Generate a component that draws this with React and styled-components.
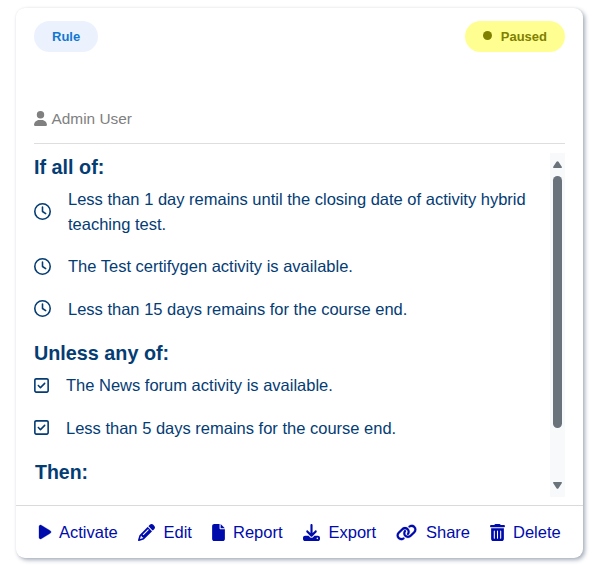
import React from "react";
import styled, { createGlobalStyle } from "styled-components";
import { FaUser, FaRegClock, FaRegSquareCheck, FaPlay, FaPencil, FaFile, FaDownload, FaLink, FaTrashCan } from "react-icons/fa6";

const Global = createGlobalStyle`
  *, *::before, *::after { box-sizing: border-box; }
  body { margin: 0; background: #fff; font-family: "Liberation Sans", Arial, sans-serif; }
`;

const Page = styled.main`
  height: 566px;
  padding: 8px 14px 8px 16px;
  overflow: hidden;
`;

const Card = styled.article`
  display: flex;
  flex-direction: column;
  width: 567px;
  height: 550px;
  border-radius: 9px;
  background: #fff;
  box-shadow: 2px 2px 4px rgba(9, 30, 66, 0.36), 0 0 2px rgba(9, 30, 66, 0.06);
`;

const Header = styled.header`
  display: flex;
  justify-content: space-between;
  align-items: flex-start;
  height: 88px;
  padding: 13px 18px 0;
`;

const Pill = styled.span`
  display: flex;
  align-items: center;
  gap: 9px;
  height: 31px;
  padding: 0 18px;
  border-radius: 16px;
  font-size: 13px;
  font-weight: 700;
  color: ${(p) => (p.$paused ? "#808000" : "#1177d1")};
  background: ${(p) => (p.$paused ? "#ffff91" : "#ebf2fe")};
`;

const Dot = styled.i`
  width: 9px;
  height: 9px;
  margin-bottom: 2px;
  border-radius: 50%;
  background: currentColor;
`;

const Author = styled.div`
  display: flex;
  align-items: center;
  gap: 4.5px;
  height: 48px;
  margin: 0 18px;
  padding-bottom: 2px;
  border-bottom: 1px solid #dedede;
  font-size: 15.4px;
  color: #808080;
  svg { width: 13px; }
`;

const Body = styled.section`
  display: flex;
  height: 344px;
  margin: 9px 18px 8px;
`;

const Conditions = styled.div`
  flex: 1;
  overflow: hidden;
`;

const Heading = styled.h3`
  margin: 0;
  height: 34px;
  padding-top: 2px;
  padding-left: ${(p) => p.$indent || 0}px;
  font-size: ${(p) => (p.$indent ? 19.5 : 19.8)}px;
  line-height: 24px;
  color: #043c74;
`;

const Condition = styled.div`
  display: flex;
  align-items: center;
  gap: 17px;
  width: 500px;
  margin-bottom: 17.75px;
  font-size: 16.5px;
  line-height: 24.75px;
  color: #043c74;
  svg {
    flex: none;
    width: ${(p) => (p.$check ? 15 : 17)}px;
    margin-bottom: 0.5px;
  }
`;

const Scrollbar = styled.div`
  display: flex;
  flex-direction: column;
  align-items: center;
  width: 15px;
  padding: 8px 0;
  background: #f8f9fb;
`;

const Thumb = styled.div`
  width: 9px;
  height: 252px;
  margin: 8px 0 auto;
  border-radius: 5px;
  background: #6a727b;
`;

const Footer = styled.footer`
  display: flex;
  align-items: center;
  height: 53px;
  padding-left: 21px;
  border-top: 1px solid #d9dadc;
`;

const Action = styled.button`
  display: flex;
  align-items: center;
  gap: ${(p) => p.$gap}px;
  width: ${(p) => p.$width}px;
  flex: none;
  padding: 0;
  border: 0;
  background: none;
  font: 16.5px "Liberation Sans", Arial, sans-serif;
  text-align: left;
  color: #000bac;
  svg {
    flex: none;
    stroke: currentColor;
    stroke-width: ${(p) => p.$stroke || 0}px;
  }
`;

const Arrow = ({ down }) => (
  <svg width="9" height="7" viewBox="0 0 9 7" fill="#6a727b">
    <path d={down ? "M.3 0h8.4q.3.8-.1 1.4L5.5 6.2q-1 1.1-2 0L.4 1.4Q0 .8.3 0Z" : "M.3 7h8.4q.3-.8-.1-1.4L5.5.8q-1-1.1-2 0L.4 5.6Q0 6.2.3 7Z"} />
  </svg>
);

const actions = [
  { label: "Activate", Icon: FaPlay, size: 16, gap: 6, width: 101, stroke: 10 },
  { label: "Edit", Icon: FaPencil, size: 17, gap: 8.5, width: 72 },
  { label: "Report", Icon: FaFile, size: 17, gap: 6, width: 93 },
  { label: "Export", Icon: FaDownload, size: 17, gap: 8.5, width: 93 },
  { label: "Share", Icon: FaLink, size: 21, gap: 9, width: 93, stroke: 6 },
  { label: "Delete", Icon: FaTrashCan, size: 17, gap: 7, width: 80 },
];

export default function App() {
  return (
    <Page>
      <Global />
      <Card>
        <Header>
          <Pill>Rule</Pill>
          <Pill $paused><Dot />Paused</Pill>
        </Header>
        <Author><FaUser size={15} />Admin User</Author>
        <Body>
          <Conditions>
            <Heading>If all of:</Heading>
            <Condition><FaRegClock size={17} /><span>Less than 1 day remains until the closing date of activity hybrid teaching test.</span></Condition>
            <Condition><FaRegClock size={17} /><span>The Test certifygen activity is available.</span></Condition>
            <Condition><FaRegClock size={17} /><span>Less than 15 days remains for the course end.</span></Condition>
            <Heading>Unless any of:</Heading>
            <Condition $check><FaRegSquareCheck size={17} /><span>The News forum activity is available.</span></Condition>
            <Condition $check><FaRegSquareCheck size={17} /><span>Less than 5 days remains for the course end.</span></Condition>
            <Heading $indent={1}>Then:</Heading>
          </Conditions>
          <Scrollbar><Arrow /><Thumb /><Arrow down /></Scrollbar>
        </Body>
        <Footer>
          {actions.map(({ label, Icon, size, gap, width, stroke }) => (
            <Action key={label} $gap={gap} $width={width} $stroke={stroke}><Icon size={size} />{label}</Action>
          ))}
        </Footer>
      </Card>
    </Page>
  );
}
